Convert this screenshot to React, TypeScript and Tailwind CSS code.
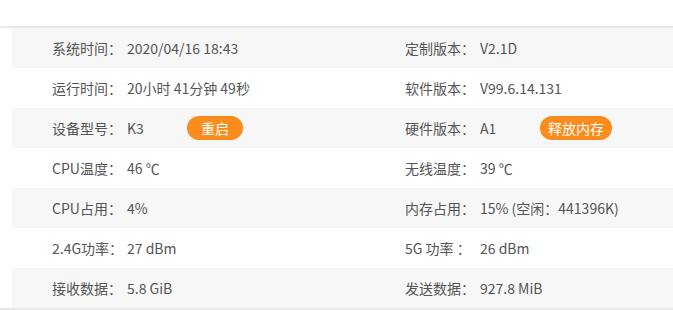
import React from "react";

type Cell = { label: string; value: string; action?: string };

const rows: [Cell, Cell][] = [
  [
    { label: "系统时间：", value: "2020/04/16 18:43" },
    { label: "定制版本：", value: "V2.1D" },
  ],
  [
    { label: "运行时间：", value: "20小时 41分钟 49秒" },
    { label: "软件版本：", value: "V99.6.14.131" },
  ],
  [
    { label: "设备型号：", value: "K3", action: "重启" },
    { label: "硬件版本：", value: "A1", action: "释放内存" },
  ],
  [
    { label: "CPU温度：", value: "46 ℃" },
    { label: "无线温度：", value: "39 ℃" },
  ],
  [
    { label: "CPU占用：", value: "4%" },
    { label: "内存占用：", value: "15% (空闲：441396K)" },
  ],
  [
    { label: "2.4G功率：", value: "27 dBm" },
    { label: "5G 功率 ：", value: "26 dBm" },
  ],
  [
    { label: "接收数据：", value: "5.8 GiB" },
    { label: "发送数据：", value: "927.8 MiB" },
  ],
];

function InfoCell({ cell, wide }: { cell: Cell; wide?: boolean }) {
  return (
    <div className={`flex items-center ${wide ? "w-[353px]" : "flex-1"} pl-10`}>
      <span className="w-[75px] shrink-0 whitespace-nowrap">{cell.label}</span>
      {cell.action ? (
        <>
          <span className="w-[60px] shrink-0 whitespace-nowrap">{cell.value}</span>
          <button className="h-6 min-w-[56px] px-2 rounded-full bg-[#f98c1c] text-white text-[14px] leading-6">
            {cell.action}
          </button>
        </>
      ) : (
        <span className="whitespace-nowrap">{cell.value}</span>
      )}
    </div>
  );
}

export default function App() {
  return (
    <div
      className="w-[673px] h-[310px] bg-white text-[14px] text-[#555555] overflow-hidden"
      style={{ fontFamily: '"Noto Sans CJK SC", "Open Sans", sans-serif' }}
    >
      <div className="h-[26px]" />
      <div className="border-t-2 border-b-2 border-[#e8e8e8]">
        {rows.map(([left, right], i) => (
          <div
            key={i}
            className={`ml-3 h-10 flex ${i % 2 === 0 ? "bg-[#f7f7f7]" : "bg-white"}`}
          >
            <InfoCell cell={left} wide />
            <InfoCell cell={right} />
          </div>
        ))}
      </div>
    </div>
  );
}
